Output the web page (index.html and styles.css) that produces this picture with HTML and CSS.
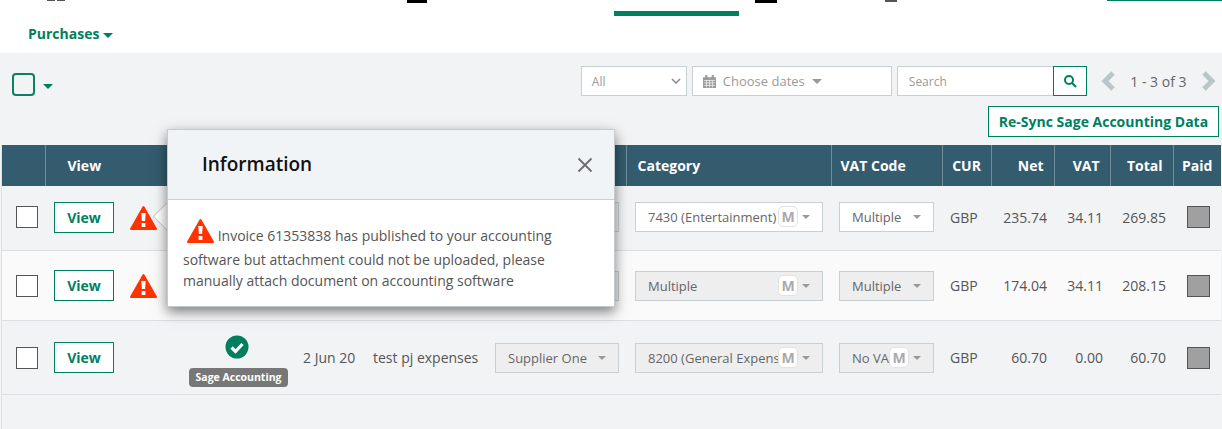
FILE: index.html
```html
<!DOCTYPE html>
<html lang="en">
<head>
    <meta charset="UTF-8">
    <title>Purchases</title>
    <link rel="stylesheet" href="styles.css">
</head>
<body>
    <header class="page-header">
        <div class="top-nav">
            <span class="nav-bit nav-bit-a"></span>
            <span class="nav-bit nav-bit-b"></span>
            <span class="nav-bit nav-bit-c"></span>
            <span class="nav-bit nav-active"></span>
            <span class="nav-bit nav-bit-d"></span>
            <span class="nav-bit nav-bit-e"></span>
            <span class="nav-bit nav-bit-f"></span>
        </div>
        <a class="purchases-link" href="#">Purchases <span class="caret caret-green"></span></a>
    </header>

    <section class="toolbar">
        <div class="select-all">
            <span class="select-all-box"></span>
            <span class="caret caret-green"></span>
        </div>
        <div class="filters">
            <div class="filter filter-all">
                <span>All</span>
                <svg class="chevron-down" width="10" height="6" viewBox="0 0 10 6"><path d="M1 1l4 4 4-4" fill="none" stroke="#8a8f94" stroke-width="1.6"/></svg>
            </div>
            <div class="filter filter-dates">
                <svg width="13" height="14" viewBox="0 0 12 13"><path fill="#9a9a9a" d="M0 3h12v10H0zM2 1h2v3H2zM8 1h2v3H8z"/><path stroke="#f2f3f5" stroke-width=".7" d="M1 6h10M1 8.300h10M1 10.600h10M3.300 5.500V12.500M6 5.500V12.500M8.700 5.500V12.500"/></svg>
                <span>Choose dates</span>
                <span class="caret caret-dates"></span>
            </div>
            <div class="search">
                <div class="search-input">Search</div>
                <button class="search-btn">
                    <svg width="14" height="14" viewBox="0 0 14 14"><circle cx="6" cy="6" r="4" fill="none" stroke="#007f5f" stroke-width="2"/><path d="M9 9l4 4" stroke="#007f5f" stroke-width="2.200"/></svg>
                </button>
            </div>
            <div class="pager">
                <svg width="15" height="20" viewBox="0 0 15 20"><path d="M12 2l-8 8 8 8" fill="none" stroke="#b9c6ca" stroke-width="5"/></svg>
                <span>1 - 3 of 3</span>
                <svg width="15" height="20" viewBox="0 0 15 20"><path d="M3 2l8 8-8 8" fill="none" stroke="#b9c6ca" stroke-width="5"/></svg>
            </div>
        </div>
    </section>
    <div class="sync-row">
        <button class="sync-btn">Re-Sync Sage Accounting Data</button>
    </div>

    <div class="table-wrap">
        <table class="invoices">
            <colgroup>
                <col class="col-check"><col class="col-view"><col class="col-status"><col class="col-date"><col class="col-desc"><col class="col-supplier"><col class="col-category"><col class="col-vatcode"><col class="col-cur"><col class="col-net"><col class="col-vat"><col class="col-total"><col class="col-paid">
            </colgroup>
            <thead>
                <tr>
                    <th></th>
                    <th class="th-view">View</th>
                    <th></th>
                    <th></th>
                    <th></th>
                    <th></th>
                    <th>Category</th>
                    <th>VAT Code</th>
                    <th>CUR</th>
                    <th class="num">Net</th>
                    <th class="num">VAT</th>
                    <th class="num">Total</th>
                    <th>Paid</th>
                </tr>
            </thead>
            <tbody>
                <tr class="row-one">
                    <td><span class="check"></span></td>
                    <td class="view-td">
                        <div class="view-cell">
                            <a class="view-btn" href="#">View</a>
                            <svg class="warn" width="27" height="25" viewBox="0 0 27 25"><path fill="#ff3300" stroke="#ff3300" stroke-width="2" stroke-linejoin="round" d="M13.500 2L26 24H1z"/><path fill="#fff" d="M11.300 8h4.400l-.6 8h-3.200zM11.600 18h3.800v4h-3.800z"/></svg>
                        </div>
                    </td>
                    <td></td>
                    <td></td>
                    <td></td>
                    <td class="supplier-cell"><div class="pick pick-off"><span class="caret caret-grey"></span></div></td>
                    <td class="category-cell"><div class="pick">7430 (Entertainment)<span class="m-tag">M</span><span class="caret caret-grey"></span></div></td>
                    <td><div class="pick">Multiple<span class="caret caret-grey"></span></div></td>
                    <td>GBP</td>
                    <td class="num">235.74</td>
                    <td class="num">34.11</td>
                    <td class="num">269.85</td>
                    <td><span class="paid-box"></span></td>
                </tr>
                <tr class="row-two">
                    <td><span class="check"></span></td>
                    <td class="view-td">
                        <div class="view-cell">
                            <a class="view-btn" href="#">View</a>
                            <svg class="warn" width="27" height="25" viewBox="0 0 27 25"><path fill="#ff3300" stroke="#ff3300" stroke-width="2" stroke-linejoin="round" d="M13.500 2L26 24H1z"/><path fill="#fff" d="M11.300 8h4.400l-.6 8h-3.200zM11.600 18h3.800v4h-3.800z"/></svg>
                        </div>
                    </td>
                    <td></td>
                    <td></td>
                    <td></td>
                    <td class="supplier-cell"><div class="pick pick-off"><span class="caret caret-grey"></span></div></td>
                    <td class="category-cell"><div class="pick pick-off">Multiple<span class="m-tag">M</span><span class="caret caret-grey"></span></div></td>
                    <td><div class="pick pick-off">Multiple<span class="caret caret-grey"></span></div></td>
                    <td>GBP</td>
                    <td class="num">174.04</td>
                    <td class="num">34.11</td>
                    <td class="num">208.15</td>
                    <td><span class="paid-box"></span></td>
                </tr>
                <tr class="row-three">
                    <td><span class="check"></span></td>
                    <td class="view-td"><div class="view-cell"><a class="view-btn" href="#">View</a></div></td>
                    <td class="status-cell">
                        <svg class="ok" width="24" height="24" viewBox="0 0 24 24"><circle cx="12" cy="12" r="11.500" fill="#007f5f"/><path d="M6.500 12.500l4 4 7-7.500" fill="none" stroke="#fff" stroke-width="3.200"/></svg>
                        <span class="sage-tag">Sage Accounting</span>
                    </td>
                    <td>2 Jun 20</td>
                    <td>test pj expenses</td>
                    <td class="supplier-cell"><div class="pick pick-off">Supplier One<span class="caret caret-grey"></span></div></td>
                    <td class="category-cell"><div class="pick pick-off">8200 (General Expens<span class="m-tag">M</span><span class="caret caret-grey"></span></div></td>
                    <td><div class="pick pick-off">No VA<span class="m-tag m-tag-vat">M</span><span class="caret caret-grey"></span></div></td>
                    <td>GBP</td>
                    <td class="num">60.70</td>
                    <td class="num">0.00</td>
                    <td class="num">60.70</td>
                    <td><span class="paid-box"></span></td>
                </tr>
            </tbody>
        </table>
    </div>

    <div class="info-popup">
        <div class="info-head">
            <h3>Information</h3>
            <svg width="16" height="16" viewBox="0 0 16 16"><path d="M1.500 1.500l13 13M14.500 1.500l-13 13" stroke="#6e6e6e" stroke-width="1.800"/></svg>
        </div>
        <div class="info-body">
            <svg class="warn-inline" width="27" height="25" viewBox="0 0 27 25"><path fill="#ff3300" stroke="#ff3300" stroke-width="2" stroke-linejoin="round" d="M13.500 2L26 24H1z"/><path fill="#fff" d="M11.300 8h4.400l-.6 8h-3.200zM11.600 18h3.800v4h-3.800z"/></svg>
            Invoice 61353838 has published to your accounting software but attachment could not be uploaded, please manually attach document on accounting software
        </div>
        <span class="info-arrow"></span>
    </div>
</body>
</html>
```

FILE: styles.css
```css
body {
    margin: 0;
    height: 429px;
    overflow: hidden;
    position: relative;
    font-family: "Open Sans", sans-serif;
    font-size: 14px;
    color: #555;
    background-color: #f2f3f5;
}
.page-header {
    background-color: #fff;
    height: 53px;
}
.top-nav {
    display: flex;
    align-items: flex-start;
    height: 16px;
}
.nav-bit {
    display: block;
    height: 3px;
    background-color: #000;
}
.nav-bit-a { margin-left: 47px; width: 8px; height: 1px; background-color: #555; }
.nav-bit-b { margin-left: 2px; width: 8px; height: 1px; background-color: #555; }
.nav-bit-c { margin-left: 342px; width: 20px; }
.nav-active { margin-left: 187px; margin-top: 11px; width: 125px; height: 5px; background-color: #007f5f; }
.nav-bit-d { margin-left: 16px; width: 22px; }
.nav-bit-e { margin-left: 108px; width: 12px; height: 2px; background-color: #555; }
.nav-bit-f { margin-left: 210px; width: 115px; height: 1px; background-color: #007f5f; }
.purchases-link {
    display: block;
    margin: 9px 0 0 28px;
    color: #007f5f;
    font-weight: 700;
    font-size: 14px;
    line-height: 17px;
    text-decoration: none;
}
.caret {
    display: inline-block;
    border-left: 5px solid transparent;
    border-right: 5px solid transparent;
    border-top: 5px solid #007f5f;
    vertical-align: middle;
}
.caret-grey {
    border-left-width: 4px;
    border-right-width: 4px;
    border-top: 4px solid #999;
}
.caret-dates { border-top-color: #999; }

.toolbar {
    display: flex;
    justify-content: space-between;
    padding: 13px 6px 0 12px;
    height: 30px;
}
.select-all {
    display: flex;
    align-items: center;
    gap: 8px;
    height: 36px;
}
.select-all-box {
    width: 19px;
    height: 19px;
    border: 2px solid #0d7f62;
    border-radius: 4px;
}
.select-all .caret { margin-top: 4px; }
.filters {
    display: flex;
    align-items: flex-start;
    gap: 5px;
}
.filter {
    display: flex;
    align-items: center;
    height: 28px;
    padding: 0 10px;
    background-color: #fff;
    border: 1px solid #c8d0d4;
    color: #9a9a9a;
    font-size: 13px;
}
.filter-all {
    width: 89px;
    padding-right: 5px;
    justify-content: space-between;
    font-size: 12px;
}
.filter-dates {
    width: 178px;
    gap: 7px;
}
.search { display: flex; }
.search-input {
    width: 144px;
    height: 28px;
    padding-left: 11px;
    background-color: #fff;
    border: 1px solid #c8d0d4;
    border-right: none;
    color: #9a9a9a;
    font-size: 12px;
    line-height: 30px;
}
.search-btn {
    width: 34px;
    height: 30px;
    padding: 0;
    background-color: #fff;
    border: 1px solid #007f5f;
    display: flex;
    align-items: center;
    justify-content: center;
}
.pager {
    display: flex;
    align-items: center;
    gap: 14.5px;
    height: 30px;
    margin-left: 9px;
    font-size: 14px;
    color: #666;
}
.sync-row {
    display: flex;
    justify-content: flex-end;
    padding: 10px 3px 8px 0;
}
.sync-btn {
    width: 231px;
    height: 31px;
    padding: 0;
    background-color: #fff;
    border: 1px solid #007f5f;
    color: #007f5f;
    font-family: "Open Sans", sans-serif;
    font-weight: 700;
    font-size: 14px;
}

.table-wrap {
    width: 1219px;
    height: 284px;
    margin-left: 1px;
    border-left: 1px solid #dfe3e6;
}
.invoices {
    table-layout: fixed;
    width: 1219px;
    border-collapse: collapse;
}
.col-check { width: 43px; }
.col-view { width: 136px; }
.col-status { width: 114px; }
.col-date { width: 70px; }
.col-desc { width: 122px; }
.col-supplier { width: 139px; }
.col-category { width: 205px; }
.col-vatcode { width: 111px; }
.col-cur { width: 49px; }
.col-net { width: 63px; }
.col-vat { width: 56px; }
.col-total { width: 63px; }
.col-paid { width: 48px; }
.invoices th {
    height: 41px;
    padding: 0 8px;
    background-color: #335c6e;
    border-right: 1px solid #6f8d9a;
    color: #fff;
    font-weight: 700;
    font-size: 14px;
    text-align: center;
}
.invoices th:nth-child(7) { text-align: left; padding-left: 11px; }
.invoices th:nth-child(8) { text-align: left; padding-left: 9px; }
.invoices th:last-child { border-right: none; }
.invoices th.th-view { text-align: left; padding-left: 22px; }
.invoices th.num { text-align: right; padding-right: 10px; }
.invoices td {
    padding: 0 8px;
    border-bottom: 1px solid #dcdfe2;
    white-space: nowrap;
}
.invoices .num { text-align: right; }
.invoices td.num { padding-right: 7px; }
.invoices td.view-td { padding-left: 9px; }
.invoices td.supplier-cell { padding-right: 7px; }
.invoices td.category-cell { padding-left: 9px; }
.invoices td.status-cell { padding-right: 11px; }
.row-one td { height: 62px; padding-bottom: 2px; }
.row-two td { height: 69px; background-color: #fafafa; }
.row-three td { height: 73px; }
.invoices td.status-cell { height: 67px; padding-top: 6px; }
.check {
    display: block;
    width: 20px;
    height: 20px;
    margin-left: 6px;
    background-color: #fff;
    border: 1px solid #555;
}
.view-cell {
    display: flex;
    align-items: center;
    gap: 16px;
}
.view-btn {
    display: block;
    width: 58px;
    height: 29px;
    line-height: 29px;
    text-align: center;
    background-color: #fff;
    border: 1px solid #007f5f;
    color: #007f5f;
    font-weight: 700;
    text-decoration: none;
}
.status-cell { text-align: center; }
.ok { display: block; margin: 0 auto 9px; }
.sage-tag {
    display: block;
    width: 99px;
    margin: 0 auto;
    background-color: #777;
    border-radius: 4px;
    color: #fff;
    font-weight: 700;
    font-size: 10.5px;
    line-height: 19px;
}
.pick {
    display: flex;
    align-items: center;
    height: 28px;
    padding: 0 12px;
    position: relative;
    background-color: #fff;
    border: 1px solid #c8d0d4;
    font-size: 13px;
    color: #666;
}
.pick-off { background-color: #eee; }
.pick .caret { position: absolute; right: 12px; top: 12px; }
.m-tag {
    position: absolute;
    right: 24px;
    top: 3px;
    width: 18px;
    height: 19px;
    background-color: #fff;
    border: 1px solid #e2e2e2;
    border-radius: 5px;
    color: #aaa;
    font-weight: 700;
    font-size: 14px;
    line-height: 19px;
    text-align: center;
}
.paid-box {
    display: block;
    width: 21px;
    height: 20px;
    margin-left: 6px;
    background-color: #a0a0a0;
    border: 1px solid #555;
}

.info-popup {
    position: absolute;
    left: 167px;
    top: 129px;
    width: 446px;
    background-color: #fff;
    border: 1px solid #c4cacd;
    box-shadow: 0 5px 12px rgba(0, 0, 0, 0.5);
}
.info-head {
    display: flex;
    align-items: center;
    justify-content: space-between;
    height: 69px;
    padding: 0 21px 0 34px;
    background-color: #f1f4f6;
    border-bottom: 1px solid #c8d0d4;
}
.info-head h3 {
    margin: 0 0 2px;
    color: #111;
    font-size: 19px;
    font-weight: 600;
}
.info-body {
    padding: 18px 30px 15px 15px;
    color: #555;
    font-size: 14px;
    line-height: 21px;
}
.warn-inline {
    vertical-align: -8px;
    margin: 0 0 6px 4px;
}
.info-arrow {
    position: absolute;
    left: -11px;
    top: 76px;
    width: 20px;
    height: 20px;
    transform: rotate(45deg);
    background-color: #fff;
    border-left: 1px solid #c4cacd;
    border-bottom: 1px solid #c4cacd;
    z-index: -1;
}
```
